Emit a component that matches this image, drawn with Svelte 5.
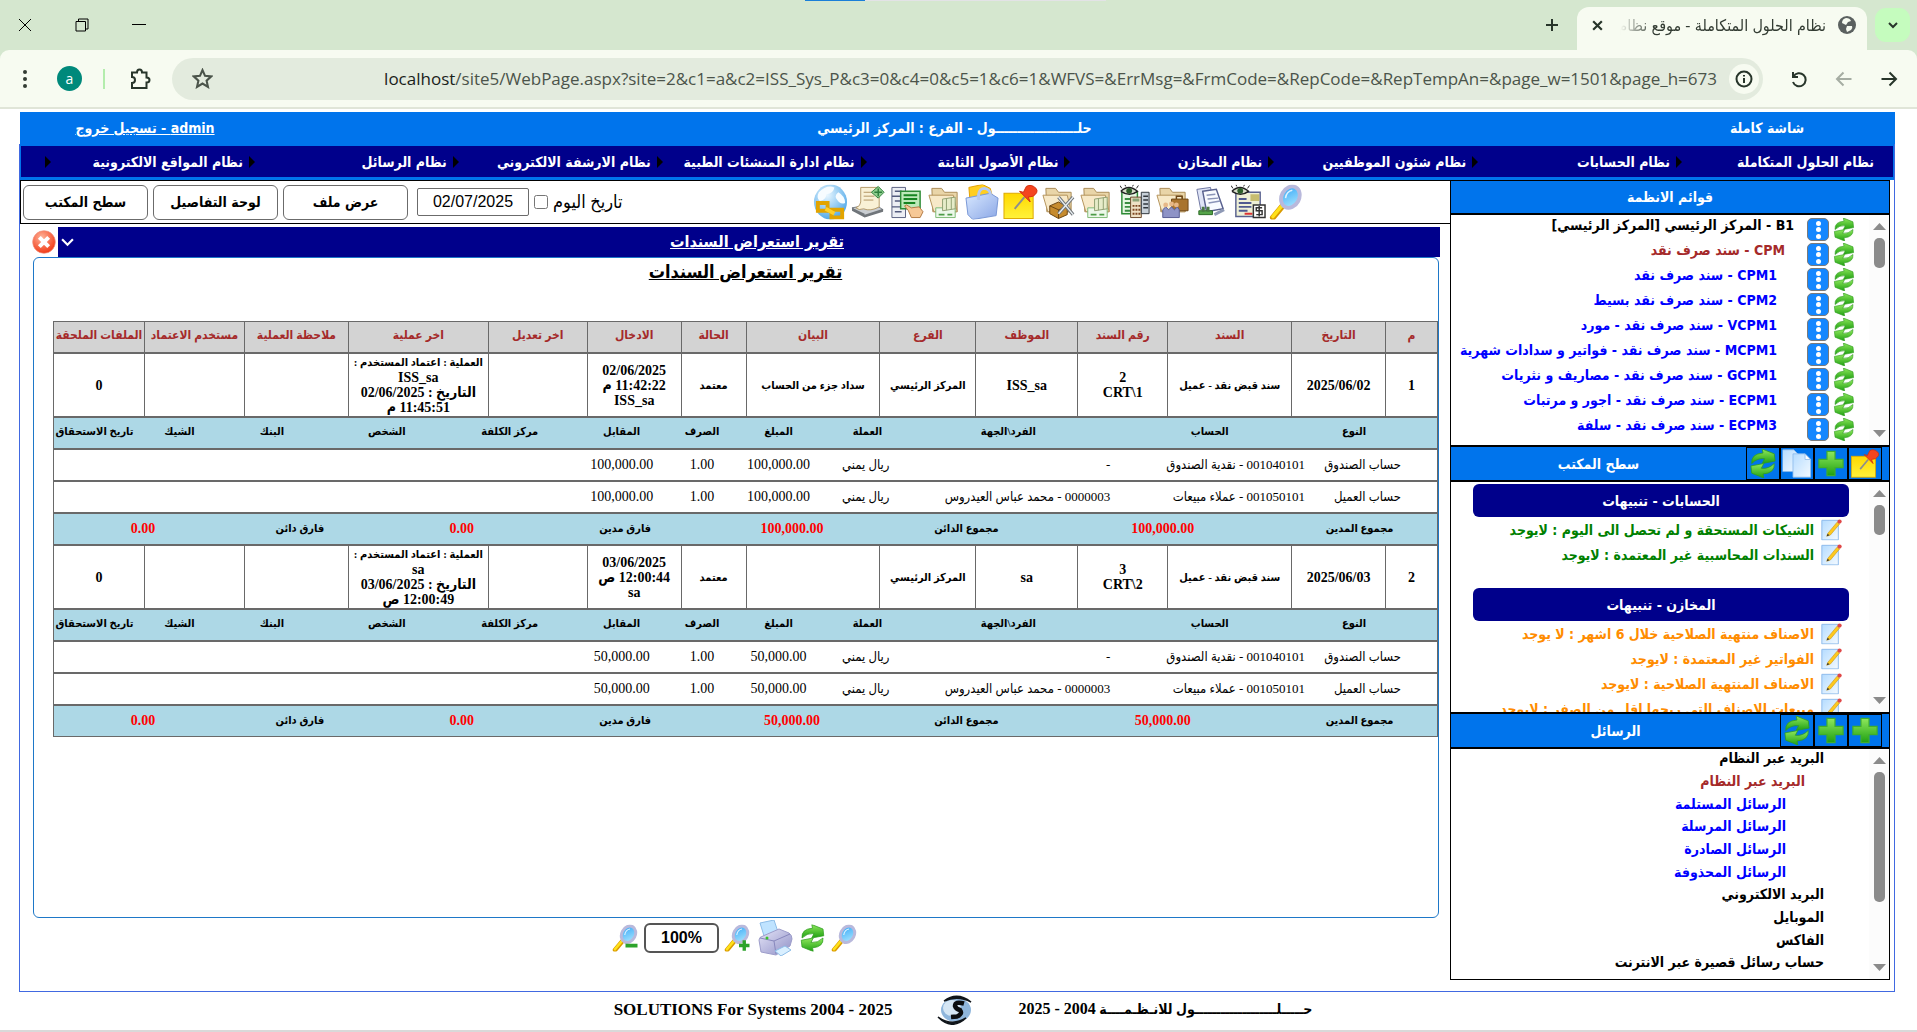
<script>
  const menu = [
    'نظام الحلول المتكاملة', 'نظام الحسابات', 'نظام شئون الموظفيين', 'نظام المخازن', 'نظام الأصول الثابتة',
    'نظام ادارة المنشئات الطبية', 'نظام الارشفة الالكتروني', 'نظام الرسائل', 'نظام المواقع الالكترونية'
  ];
  const tools = ['search', 'invoice', 'print-docs', 'staff', 'calc', 'money', 'repair', 'pin', 'bag', 'money', 'forms', 'note', 'globe'];
  const systems = [
    { text: 'B1 - المركز الرئيسي [المركز الرئيسي]', level: 0 },
    { text: 'CPM - سند صرف نقد', level: 1 },
    { text: 'CPM1 - سند صرف نقد', level: 2 },
    { text: 'CPM2 - سند صرف نقد بسيط', level: 2 },
    { text: 'VCPM1 - سند صرف نقد - مورد', level: 2 },
    { text: 'MCPM1 - سند صرف نقد - فواتير و سدادات شهرية', level: 2 },
    { text: 'GCPM1 - سند صرف نقد - مصاريف و نثريات', level: 2 },
    { text: 'ECPM1 - سند صرف نقد - اجور و مرتبات', level: 2 },
    { text: 'ECPM3 - سند صرف نقد - سلفة', level: 2 }
  ];
  const alerts = [
    { title: 'الحسابات - تنبيهات', tone: 'green', items: ['الشيكات المستحقة و لم تحصل الى اليوم : لايوجد', 'السندات المحاسبية غير المعتمدة : لايوجد'] },
    { title: 'المخازن - تنبيهات', tone: 'orange', items: ['الاصناف منتهية الصلاحية خلال 6 اشهر : لا يوجد', 'الفواتير غير المعتمدة : لايوجد', 'الاصناف المنتهية الصلاحية : لايوجد', 'مبيعات الاصناف التي ربحها اقل من الصفر : لايوجد'] }
  ];
  const mail = [
    { text: 'البريد عبر النظام', level: 0 },
    { text: 'البريد عبر النظام', level: 1 },
    { text: 'الرسائل المستلمة', level: 2 },
    { text: 'الرسائل المرسلة', level: 2 },
    { text: 'الرسائل الصادرة', level: 2 },
    { text: 'الرسائل المحذوفة', level: 2 },
    { text: 'البريد الالكتروني', level: 0 },
    { text: 'الموبايل', level: 0 },
    { text: 'الفاكس', level: 0 },
    { text: 'حساب رسائل قصيرة عبر الانترنت', level: 0 }
  ];

  const masterCols = [51, 94, 124, 90, 102, 96, 134, 65, 94, 99, 140, 104, 100, 91];
  const detailCols = [130, 195, 208, 74, 104, 49, 112, 112, 134, 96, 89, 81];
  const totalCols = [155, 239, 154, 195, 139, 188, 136, 178];
  const masterHead = ['م', 'التاريخ', 'السند', 'رقم السند', 'الموظف', 'الفرع', 'البيان', 'الحالة', 'الادخال', 'اخر تعديل', 'اخر عملية', 'ملاحظة العملية', 'مستخدم الاعتماد', 'الملفات الملحقة'];
  const detailHead = ['النوع', 'الحساب', 'الفرد\\الجهة', 'العملة', 'المبلغ', 'الصرف', 'المقابل', 'مركز الكلفة', 'الشخص', 'البنك', 'الشيك', 'تاريخ الاستحقاق'];
  const records = [
    {
      cells: [['1'], ['2025/06/02'], ['سند قبض نقد - عميل'], ['2', 'CRT\\1'], ['ISS_sa'], ['المركز الرئيسي'], ['سداد جزء من الحساب'], ['معتمد'],
        ['02/06/2025', '11:42:22 م', 'ISS_sa'], [], ['العملية : اعتماد المستخدم :', 'ISS_sa', 'التاريخ : 02/06/2025', '11:45:51 م'], [], [], ['0']],
      amount: '100,000.00'
    },
    {
      cells: [['2'], ['2025/06/03'], ['سند قبض نقد - عميل'], ['3', 'CRT\\2'], ['sa'], ['المركز الرئيسي'], [], ['معتمد'],
        ['03/06/2025', '12:00:44 ص', 'sa'], [], ['العملية : اعتماد المستخدم :', 'sa', 'التاريخ : 03/06/2025', '12:00:49 ص'], [], [], ['0']],
      amount: '50,000.00'
    }
  ];
  const lines = (amount) => [
    ['حساب الصندوق', '001040101 - نقدية الصندوق', '-', 'ريال يمني', amount, '1.00', amount],
    ['حساب العميل', '001050101 - عملاء مبيعات', '0000003 - محمد عباس العيدروس', 'ريال يمني', amount, '1.00', amount]
  ];
  const totals = (amount) => ['مجموع المدين', amount, 'مجموع الدائن', amount, 'فارق مدين', '0.00', 'فارق دائن', '0.00'];
  const arabicOnly = (s) => /[\u0600-\u06ff]/.test(s) && !/\d/.test(s);

  let today = $state('02/07/2025');
  let zoom = $state('100%');
</script>

{#snippet icon(name, cls)}
  <svg class={cls} viewBox="0 0 36 36" aria-hidden="true"><use href="#i-{name}" /></svg>
{/snippet}

{#snippet cols(list)}
  <colgroup>
    {#each list as w}<col style="width:{(w / 1384) * 100}%" />{/each}
  </colgroup>
{/snippet}

{#snippet scrollbar(cls)}
  <div class="scrollbar {cls}" aria-hidden="true">
    <svg viewBox="0 0 13 7"><path d="M0 7L6.500 0L13 7Z" /></svg>
    <i></i>
    <svg class="down" viewBox="0 0 13 7"><path d="M0 0L6.500 7L13 0Z" /></svg>
  </div>
{/snippet}

<svg class="defs" width="0" height="0" aria-hidden="true">
  <defs>
    <linearGradient id="g-green" x1="0" y1="0" x2="0" y2="1"><stop offset="0" stop-color="#8fe85c" /><stop offset="1" stop-color="#1fa012" /></linearGradient>
    <linearGradient id="g-lens" x1="0" y1="0" x2="1" y2="1"><stop offset="0" stop-color="#2fa4f7" /><stop offset="1" stop-color="#b5ecff" /></linearGradient>
    <linearGradient id="g-page" x1="0" y1="0" x2="1" y2="1"><stop offset="0" stop-color="#b5dcff" /><stop offset="1" stop-color="#f4faff" /></linearGradient>
    <linearGradient id="g-yellow" x1="0" y1="0" x2="0" y2="1"><stop offset="0" stop-color="#ffd800" /><stop offset="1" stop-color="#fff23a" /></linearGradient>
    <linearGradient id="g-bag" x1="0" y1="0" x2="1" y2="1"><stop offset="0" stop-color="#d8e8ff" /><stop offset="1" stop-color="#8ba7e6" /></linearGradient>
    <radialGradient id="g-red" cx=".4" cy=".3" r=".8"><stop offset="0" stop-color="#ffb49a" /><stop offset="1" stop-color="#f02a05" /></radialGradient>
    <radialGradient id="g-globe" cx=".4" cy=".3" r=".8"><stop offset="0" stop-color="#e9f7ff" /><stop offset="1" stop-color="#3f9fe6" /></radialGradient>
    <linearGradient id="g-printer" x1="0" y1="0" x2="1" y2="1"><stop offset="0" stop-color="#e6e6f8" /><stop offset="1" stop-color="#8f8fc6" /></linearGradient>
  </defs>
  <symbol id="i-search" viewBox="0 0 36 36">
    <path d="M4 34L14 22" stroke="#d99a00" stroke-width="6" stroke-linecap="round" /><path d="M4 33L14 21" stroke="#ffe11a" stroke-width="3.500" stroke-linecap="round" />
    <ellipse cx="22" cy="13" rx="9" ry="11.500" transform="rotate(28 22 13)" fill="url(#g-lens)" stroke="#b9b9dc" stroke-width="4" />
    <path d="M17 14q1-7 7-8" stroke="#fff" stroke-width="1.500" fill="none" opacity=".8" />
  </symbol>
  <symbol id="i-zoom-in" viewBox="0 0 36 36"><use href="#i-search" /><path d="M20 28h14M27 21v14" stroke="#2da32b" stroke-width="4.500" /></symbol>
  <symbol id="i-zoom-out" viewBox="0 0 36 36"><use href="#i-search" /><path d="M18 28h16" stroke="#2da32b" stroke-width="5" /></symbol>
  <symbol id="i-refresh" viewBox="0 0 36 36">
    <path d="M4 18Q3 6 18 5L17 0L32 6L33 15L17 18L20 12Q11 11 4 18Z" fill="url(#g-green)" stroke="#2f9d20" />
    <path d="M32 18Q33 30 18 31L19 36L4 30L3 21L19 18L16 24Q25 25 32 18Z" fill="url(#g-green)" stroke="#2f9d20" />
  </symbol>
  <symbol id="i-plus" viewBox="0 0 36 36"><path d="M13 3h10v10h10v10H23v10H13V23H3V13h10Z" fill="url(#g-green)" stroke="#3fae2c" stroke-width="1.500" /></symbol>
  <symbol id="i-pin" viewBox="0 0 36 36">
    <rect x="1" y="9" width="30" height="26" fill="url(#g-yellow)" stroke="#dda800" />
    <path d="M12 25L22 13" stroke="#8d8d8d" stroke-width="2" /><path d="M17 7L28 18L26 13L31 12Q37 8 34 4Q29-1 24 2L21 8Z" fill="#f4451f" stroke="#d33010" />
  </symbol>
  <symbol id="i-copy" viewBox="0 0 36 36">
    <path d="M0 1h14l7 7v20H0Z" fill="url(#g-page)" stroke="#8ab8ea" /><path d="M13 6h15l7 7v22H13Z" fill="url(#g-page)" stroke="#8ab8ea" /><path d="M28 6v7h7Z" fill="#fff" stroke="#8ab8ea" />
  </symbol>
  <symbol id="i-edit" viewBox="0 0 36 36">
    <path d="M3 3h27v32H3Z" fill="url(#g-page)" stroke="#8ab8ea" stroke-width="1.500" /><path d="M13 24L28 6L32 9L17 27L11 29Z" fill="#ffc91d" stroke="#c99613" /><circle cx="32" cy="5" r="3.500" fill="#e04848" /><path d="M11 29l1.500-4 3 2.500Z" fill="#333" />
  </symbol>
  <symbol id="i-close" viewBox="0 0 36 36"><circle cx="18" cy="18" r="17" fill="url(#g-red)" stroke="#f0907c" /><path d="M11 11L25 25M25 11L11 25" stroke="#fff" stroke-width="6" /></symbol>
  <symbol id="i-printer" viewBox="0 0 36 36">
    <path d="M3 3L17 0L22 15L8 19Z" fill="#bfe3ff" stroke="#8dbde8" /><path d="M2 20Q2 17 6 16L22 9L32 13Q35 15 35 19L33 26L19 35L4 32Z" fill="url(#g-printer)" stroke="#9d9dca" /><path d="M3 18L17 21L33 14M17 21L19 34" stroke="#8888bd" fill="none" /><circle cx="10" cy="18" r="1.500" fill="#38c42b" /><path d="M18 31L28 26L34 30L24 36Z" fill="#d9efff" stroke="#8dbde8" />
  </symbol>
  <symbol id="i-folder" viewBox="0 0 36 36"><path d="M5 4h10l3 4h13v20H6Z" fill="#e9d5a8" stroke="#a98a55" /><path d="M2 11h25l4 17H7Z" fill="#f7e9c8" stroke="#b4935b" /></symbol>
  <symbol id="i-money" viewBox="0 0 36 36">
    <use href="#i-folder" /><path d="M9 24h20v10H9Z" fill="#edf8ea" stroke="#7dba75" /><path d="M16 15l13-2v12l-13 2Z" fill="#e6ecc9" stroke="#8fa073" /><path d="M20 14.500v12M25 13.500v12" stroke="#8fa073" /><path d="M12 31h6M21 31h5" stroke="#4d9b47" stroke-width="2" />
  </symbol>
  <symbol id="i-repair" viewBox="0 0 36 36">
    <use href="#i-folder" /><path d="M9 22l9-4 9 5v8l-9 4-9-5Z" fill="#c68b2e" stroke="#6b4511" /><path d="M9 22l9 4 9-3M18 26v9" stroke="#6b4511" fill="none" /><path d="M18 13L33 31M33 13L18 30" stroke="#72777b" stroke-width="3.500" /><path d="M18 13L33 31M33 13L18 30" stroke="#e9eef1" stroke-width="1.500" />
  </symbol>
  <symbol id="i-bag" viewBox="0 0 36 36">
    <path d="M4 3L18 0L26 4L29 15H5Z" fill="#ffce20" stroke="#e3a000" /><path d="M1 14L26 9L34 14L32 32L8 36L3 31Z" fill="url(#g-bag)" stroke="#7796d6" /><path d="M14 16V10Q15 4 20 4Q26 5 26 10V14" stroke="#b5c9f0" stroke-width="3" fill="none" />
  </symbol>
  <symbol id="i-globe" viewBox="0 0 36 36">
    <ellipse cx="18" cy="18" rx="17" ry="18" fill="url(#g-globe)" /><path d="M6 8q8-8 16-5q-1 6-8 7q-1 6-7 7q-4-3-1-9M26 8q7 4 7 11q-5 2-8-3q-4-4 1-8" fill="#f7fcff" /><path d="M5 19h10v8H5ZM19 26h11v8H19Z" fill="none" stroke="#e2a400" stroke-width="4" /><path d="M13 25L22 30" stroke="#ffd02b" stroke-width="4" />
  </symbol>
  <symbol id="i-note" viewBox="0 0 36 36">
    <path d="M1 24L24 20L33 26L14 33Z" fill="#c9cdd1" stroke="#777d84" /><path d="M1 24l13 6v4L1 27ZM14 31l19-6v3l-19 6Z" fill="#70757a" /><path d="M10 3h19v20q-9 5-16 2q-5 2-8-1q5-2 5-6Z" fill="#f9f1d6" stroke="#b49a69" /><path d="M13 8h9M13 12h11M13 16h10" stroke="#b29563" /><path d="M21 8l7-6 6 6-6 6Z" fill="#8fcf8f" stroke="#2f7f3d" /><path d="M28 4v8M24 8h8" stroke="#2f7f3d" stroke-width="1.500" />
  </symbol>
  <symbol id="i-forms" viewBox="0 0 36 36">
    <path d="M3 3h14v31H3Z" fill="#eceef4" stroke="#596080" /><path d="M3 12h14M3 23h14M6 7h7M6 17h7M6 28h7" stroke="#525a7d" stroke-width="1.500" /><path d="M12 7h20v18H12Z" fill="#bde9b9" stroke="#2c8b35" stroke-width="1.500" /><path d="M15 11h14M15 15h14M15 19h12" stroke="#168421" stroke-width="2" /><path d="M20 27l-4-5 2-1 5 3 8-1 4 5-3 6h-9Z" fill="#f6c896" stroke="#b27942" />
  </symbol>
  <symbol id="i-eye" viewBox="0 0 36 36"><path d="M1 7Q9-1 18 7Q10 13 1 7" fill="#d6dcc8" stroke="#222" stroke-width="1.500" /><circle cx="9.500" cy="6.500" r="3" fill="#2c5f2a" /><path d="M2 4L0 1M6 2L5 0M13 2L14 0M17 4L19 1" stroke="#222" /></symbol>
  <symbol id="i-calc" viewBox="0 0 36 36">
    <path d="M5 8h16v22H5Z" fill="#e5f6e2" stroke="#2c8b35" stroke-width="1.500" /><path d="M8 15h9M8 19h9M8 23h9M8 27h9" stroke="#3a8d42" stroke-width="2" /><path d="M14 13h11v21H14Z" fill="#efe1c5" stroke="#6b4728" /><path d="M16 16h7" stroke="#8aa377" stroke-width="3" /><path d="M16 22h2m1 0h2m1 0h2M16 26h2m1 0h2m1 0h2M16 30h2m1 0h2m1 0h2" stroke="#7d4620" stroke-width="2" /><path d="M25 8h8v22h-8Z" fill="#c7d0d8" stroke="#30363c" /><path d="M27 12h5M27 16h5M27 20h5M27 24h5" stroke="#30363c" stroke-width="1.500" /><use href="#i-eye" x="3" width="36" height="36" />
  </symbol>
  <symbol id="i-invoice" viewBox="0 0 36 36">
    <path d="M5 8h25v25H5Z" fill="#eef0d6" stroke="#59618f" stroke-width="1.500" /><path d="M8 15h8M8 19h13M8 23h13M8 27h9" stroke="#4f5a90" stroke-width="2" /><path d="M20 10h9v7h-9Z" fill="#c7bd70" /><path d="M14 30h8" stroke="#d33" stroke-width="2" /><path d="M23 21h12v13H23Z" fill="#fff" stroke="#333" stroke-width="1.500" /><path d="M32 24h-6v3h6v4h-6M29 22v11" fill="none" stroke="#333" stroke-width="1.500" /><use href="#i-eye" width="36" height="36" />
  </symbol>
  <symbol id="i-print-docs" viewBox="0 0 36 36">
    <path d="M4 5l14-2 4 20-14 3Z" fill="#dfe4f6" stroke="#6c75a0" /><path d="M10 7l14-2 7 20-17 3Z" fill="#f8faff" stroke="#59618f" stroke-width="1.500" /><path d="M14 11l9-1M15 15l11-1M16 19l12-2" stroke="#8b94b8" stroke-width="1.500" /><path d="M6 27h14v4H6Z" fill="#55a449" stroke="#2c6a25" /><path d="M9 23h3v5H9ZM14 23h3v5h-3Z" fill="#4a7943" /><path d="M22 31l10-5" stroke="#8e99b5" stroke-width="3" />
  </symbol>
  <symbol id="i-staff" viewBox="0 0 36 36">
    <use href="#i-folder" /><path d="M17 15h17v12H17Z" fill="#a9742e" stroke="#6d4718" /><path d="M22 15v-3h6v3" fill="none" stroke="#6d4718" stroke-width="1.500" /><path d="M8 34v-8l3-3 3 3 3-3 3 3 3-3 2 3v8Z" fill="#8e93c6" stroke="#565b92" /><circle cx="11" cy="21" r="2.500" fill="#e7b888" /><circle cx="17" cy="20" r="2.500" fill="#e7b888" /><circle cx="22" cy="21" r="2.500" fill="#e7b888" />
  </symbol>
</svg>

<div class="app" dir="rtl">
  <header class="browser">
    <div class="top-mark"></div>
    <div class="tabs">
      <button class="tab-list" aria-label="Search tabs"><svg viewBox="0 0 12 12"><path d="M2 4l4 4 4-4" /></svg></button>
      <div class="tab">
        <svg class="earth" viewBox="0 0 18 18"><circle cx="9" cy="9" r="9" fill="#5b6160" /><path d="M8 2q4 0 5 3l-3 1-2 3-4-2q0-4 4-5M9 10l5 0q1 2-1 4l-4 2-1-3Z" fill="#f7fbf1" /></svg>
        <span class="tab-title">نظام الحلول المتكاملة - موقع نظام</span>
        <button class="plain" aria-label="Close tab"><svg viewBox="0 0 12 12"><path d="M2 2l8 8M10 2l-8 8" /></svg></button>
      </div>
      <button class="plain new-tab" aria-label="New tab"><svg viewBox="0 0 14 14"><path d="M7 1v12M1 7h12" /></svg></button>
      <div class="window-controls">
        <button class="plain" aria-label="Minimize"><svg viewBox="0 0 14 14"><path d="M0 6.500h14" /></svg></button>
        <button class="plain" aria-label="Restore"><svg viewBox="0 0 14 14"><path d="M1 3.500h9.500v9.500h-9.500ZM3.500 3v-2h9.500v10h-2" /></svg></button>
        <button class="plain" aria-label="Close"><svg viewBox="0 0 14 14"><path d="M1 1l12 12M13 1L1 13" /></svg></button>
      </div>
    </div>
    <div class="toolbar">
      <button class="plain" aria-label="Back"><svg viewBox="0 0 18 18"><path d="M1.500 9h14M9.500 2.500L16 9l-6.500 6.500" /></svg></button>
      <button class="plain dim" aria-label="Forward"><svg viewBox="0 0 18 18"><path d="M16.500 9h-14M8.500 2.500L2 9l6.500 6.500" /></svg></button>
      <button class="plain" aria-label="Reload"><svg viewBox="0 0 18 18"><path d="M3 2v5h5M3.500 6.500A6.500 6.500 0 1 1 3 12" /></svg></button>
      <div class="omnibox">
        <button class="plain info" aria-label="Site information"><svg viewBox="0 0 18 18"><circle cx="9" cy="9" r="7.500" /><path d="M9 8v5M9 5v1.500" /></svg></button>
        <span class="url" dir="ltr"><b>localhost</b>/site5/WebPage.aspx?site=2&amp;c1=a&amp;c2=ISS_Sys_P&amp;c3=0&amp;c4=0&amp;c5=1&amp;c6=1&amp;WFVS=&amp;ErrMsg=&amp;FrmCode=&amp;RepCode=&amp;RepTempAn=&amp;page_w=1501&amp;page_h=673</span>
        <button class="plain star" aria-label="Bookmark"><svg viewBox="0 0 20 20"><path d="M10 2l2.400 5.500 6 .5-4.500 4 1.300 6-5.200-3.200L4.800 18l1.300-6L1.600 8l6-.5Z" /></svg></button>
      </div>
      <button class="plain puzzle" aria-label="Extensions"><svg viewBox="0 0 22 22"><path d="M3 4.500h5q0-3 2.500-3t2.500 3h4.500v5q3 0 3 2.500t-3 2.500v5.500h-14.500v-5q3 0 3-3t-3-3Z" /></svg></button>
      <span class="bar"></span>
      <button class="avatar" aria-label="Profile">a</button>
      <button class="plain dots" aria-label="Menu"><svg viewBox="0 0 4 18"><circle cx="2" cy="2" r="2" /><circle cx="2" cy="9" r="2" /><circle cx="2" cy="16" r="2" /></svg></button>
    </div>
  </header>

  <div class="page">
    <div class="account">
      <span>شاشة كاملة</span>
      <span>حلـــــــــــــــــــول - الفرع : المركز الرئيسي</span>
      <a href="#logout">admin - تسجيل خروج</a>
    </div>

    <div class="shell">
      <nav>
        {#each menu as item}
          <a href="#menu">{item}<svg viewBox="0 0 6 12"><path d="M0 0L6 6L0 12Z" /></svg></a>
        {/each}
      </nav>

      <div class="body">
        <aside>
          <section>
            <h2><span>قوائم الانظمة</span></h2>
            <div class="pane">
              {@render scrollbar('short')}
              <ul class="systems">
                {#each systems as s}
                  <li>
                    <button class="plain" aria-label="تحديث">{@render icon('refresh', 'refresh')}</button>
                    <button class="more" aria-label="المزيد"><i></i><i></i><i></i></button>
                    <a class="level{s.level}" href="#item">{s.text}</a>
                  </li>
                {/each}
              </ul>
            </div>
          </section>
          <section>
            <h2>
              {#each ['pin', 'plus', 'copy', 'refresh'] as name}<button class="tile" aria-label={name}>{@render icon(name, 'fill')}</button>{/each}
              <span>سطح المكتب</span>
            </h2>
            <div class="pane">
              {@render scrollbar('short')}
              <div class="alerts">
                {#each alerts as group}
                  <h3>{group.title}</h3>
                  <ul class={group.tone}>
                    {#each group.items as item}<li>{@render icon('edit', 'edit')}<a href="#alert">{item}</a></li>{/each}
                  </ul>
                {/each}
              </div>
            </div>
          </section>
          <section>
            <h2>
              {#each ['plus', 'plus', 'refresh'] as name}<button class="tile" aria-label={name}>{@render icon(name, 'fill')}</button>{/each}
              <span>الرسائل</span>
            </h2>
            <div class="pane">
              {@render scrollbar('long')}
              <ul class="mail">
                {#each mail as m}<li><a class="level{m.level}" href="#mail">{m.text}</a></li>{/each}
              </ul>
            </div>
          </section>
        </aside>

        <main>
          <div class="tools">
            <div class="tool-icons">
              {#each tools as t}<button class="plain" aria-label={t}>{@render icon(t, 'tool')}</button>{/each}
            </div>
            <div class="actions">
              <label for="today">تاريخ اليوم</label>
              <input id="today" type="checkbox" />
              <input class="date" type="text" bind:value={today} aria-label="التاريخ" />
              <button>عرض ملف</button>
              <button>لوحة التفاصيل</button>
              <button>سطح المكتب</button>
            </div>
          </div>

          <div class="title-row">
            <div class="title"><a href="#report">تقرير استعراض السندات</a><button class="plain" aria-label="خيارات"><svg viewBox="0 0 12 12"><path d="M1 3l5 5 5-5" /></svg></button></div>
            <button class="plain" aria-label="اغلاق">{@render icon('close', 'close')}</button>
          </div>

          <div class="report">
            <h1>تقرير استعراض السندات</h1>
            <table class="head">
              {@render cols(masterCols)}
              <thead><tr>{#each masterHead as h}<th>{h}</th>{/each}</tr></thead>
            </table>
            {#each records as r}
              <table class="master">
                {@render cols(masterCols)}
                <tbody><tr>{#each r.cells as cell}<td>{#each cell as line}<div class:ar={arabicOnly(line)}>{line}</div>{/each}</td>{/each}</tr></tbody>
              </table>
              <table class="detail names">
                {@render cols(detailCols)}
                <thead><tr>{#each detailHead as h}<th>{h}</th>{/each}</tr></thead>
              </table>
              {#each lines(r.amount) as line}
                <table class="detail">
                  {@render cols(detailCols)}
                  <tbody><tr>{#each line as v}<td>{v}</td>{/each}<td colspan="5"></td></tr></tbody>
                </table>
              {/each}
              <table class="total">
                {@render cols(totalCols)}
                <tbody><tr>{#each totals(r.amount) as v, i}<td class:sum={i % 2 === 1}>{v}</td>{/each}</tr></tbody>
              </table>
            {/each}
          </div>

          <div class="zoom">
            <button class="plain" aria-label="بحث">{@render icon('search', 'z')}</button>
            <button class="plain" aria-label="تحديث">{@render icon('refresh', 'z')}</button>
            <button class="plain" aria-label="طباعة">{@render icon('printer', 'large')}</button>
            <button class="plain" aria-label="تكبير">{@render icon('zoom-in', 'z')}</button>
            <input type="text" bind:value={zoom} aria-label="التكبير" dir="ltr" />
            <button class="plain" aria-label="تصغير">{@render icon('zoom-out', 'z')}</button>
          </div>
        </main>
      </div>
    </div>

    <footer>
      <span class="ar-brand">حـــــلـــــــــــــــــــول للانـظـمــــة <b>2004 - 2025</b></span>
      <svg viewBox="0 0 38 30"><ellipse cx="20" cy="15" rx="15" ry="12" fill="#8fb6dc" /><ellipse cx="16" cy="13" rx="9" ry="8" fill="#d5e6f4" /><path d="M8 6Q21-4 35 7Q22 0 8 6M2 22Q16 32 30 23Q16 36 2 22" fill="#10151a" stroke="#10151a" stroke-width="1.500" /><path d="M28 8.500Q19 6 19 11Q20 14 24 15Q27 19 21 21.500L15 22" stroke="#0b0d10" stroke-width="4.500" fill="none" /></svg>
      <b dir="ltr">SOLUTIONS For Systems 2004 - 2025</b>
    </footer>
  </div>
  <div class="edge"></div>
</div>

<style>
  :global(body) { margin: 0; background: #fff; }
  .defs { position: absolute; }
  .app { min-height: 100vh; display: flex; flex-direction: column; overflow: hidden; font: bold 14px/20px "DejaVu Sans Condensed", "DejaVu Sans", sans-serif; color: #000; }
  .app *, .app { box-sizing: border-box; }
  button, input { font: inherit; color: inherit; margin: 0; }
  ul, h1, h2, h3 { margin: 0; padding: 0; list-style: none; font: inherit; }
  a { color: inherit; text-decoration: none; white-space: nowrap; }
  .plain { border: 0; background: none; padding: 0; display: flex; align-items: center; justify-content: center; }

  .browser { background: #d5e7cf; border-bottom: 2px solid #e0e5d8; color: #333c33; font: 16px/20px "Open Sans", "DejaVu Sans Condensed", sans-serif; position: relative; }
  .top-mark { position: absolute; top: 0; left: 42%; width: 301px; height: 1px; background: linear-gradient(to right, #1a7fd8 20%, #e3e3e6 20%); }
  .browser svg { fill: none; stroke: #27352a; stroke-width: 2; display: block; }
  .tabs { height: 50px; display: flex; align-items: center; padding: 0 7px 0 18px; }
  .tab-list { width: 35px; height: 34px; border: 0; border-radius: 11px; background: #c5fcbe; display: flex; align-items: center; justify-content: center; padding: 0; }
  .tab-list svg { width: 12px; }
  .tab { width: 290px; height: 43px; margin: 7px 8px 0 0; border-radius: 12px 12px 0 0; background: #f7fbf1; display: flex; align-items: center; gap: 12px; padding: 0 11px 7px 14px; }
  .tab .earth { width: 18px; stroke: none; flex: none; }
  .tab-title { flex: 1; font-size: 16px; line-height: 24px; white-space: nowrap; overflow: hidden; mask-image: linear-gradient(to left, #000 82%, transparent 98%); }
  .tab .plain svg { width: 13px; }
  .new-tab { margin-right: 18px; }
  .new-tab svg { width: 14px; }
  .window-controls { margin-right: auto; display: flex; gap: 43px; }
  .browser .window-controls svg { width: 14px; stroke: #000; stroke-width: 1; }
  .toolbar { height: 57px; background: #f7fbf1; border-radius: 9px 9px 0 0; display: flex; align-items: center; padding: 0 19px 0 23px; }
  .toolbar .plain svg { width: 18px; }
  .toolbar > .plain { margin-left: 27px; }
  .toolbar .dim svg { stroke: #a6ada3; }
  .omnibox { flex: 1; height: 42px; border-radius: 21px; background: #e3ebde; display: flex; align-items: center; gap: 12px; padding: 0 4px 0 20px; min-width: 0; }
  .info { width: 30px; height: 30px; border-radius: 50%; background: #f7fbf1; flex: none; }
  .url { color: #4b544a; font: 17px/24px "Open Sans", sans-serif; white-space: nowrap; overflow: hidden; }
  .url b { font-weight: normal; color: #1a221a; }
  .star { margin-right: auto; }
  .toolbar .star svg { width: 21px; stroke: #4b544a; }
  .toolbar .puzzle { margin: 0 21px 0 24px; }
  .toolbar .puzzle svg { width: 22px; }
  .bar { width: 2px; height: 20px; background: #b4edad; }
  .avatar { width: 25px; height: 25px; border: 0; border-radius: 50%; background: #00897b; color: #fff; font-size: 14px; line-height: 20px; padding: 0; margin: 0 21px 0 30px; }
  .toolbar .dots { margin: 0; }
  .toolbar .dots svg { width: 4px; fill: #333c33; stroke: none; }

  .page { flex: 1; padding: 3px 22px 0 19px; display: flex; flex-direction: column; }
  .account { height: 32px; background: #0074ec; color: #fff; display: grid; grid-template-columns: 256px 1fr 250px; align-items: center; text-align: center; line-height: 28px; margin-left: 1px; }
  .account a { text-decoration: underline; }
  .shell { border: 1px solid #4169e1; border-top: 0; }
  nav { height: 36px; border: solid #0074ec; border-width: 2px 1px 3px; background: #00008b; color: #fff; display: flex; padding: 0 13px 0 24px; }
  nav a { flex: 1; display: flex; align-items: center; justify-content: space-between; padding-right: 6px; }
  nav svg { width: 6px; flex: none; }
  .body { display: flex; align-items: flex-start; padding-right: 4px; }

  aside { width: 440px; flex: none; border: 1px solid #000; margin-bottom: 11px; }
  h2 { display: flex; align-items: stretch; height: 34px; background: #0074ec; color: #fff; border-bottom: 2px solid #000; padding-right: 7px; }
  section:first-child h2 { padding: 0; }
  section + section h2 { height: 37px; border-top: 2px solid #000; }
  h2 span { flex: 1; text-align: center; align-self: center; }
  .tile { width: 34px; border: 1px solid #000; background: none; padding: 1px; display: flex; }
  .fill { width: 100%; height: 100%; }
  .pane { height: 230px; overflow: hidden; display: flex; background: #fff; }
  .scrollbar { width: 20px; flex: none; background: #fcfcfc; display: flex; flex-direction: column; align-items: center; padding: 8px 0; gap: 8px; }
  .scrollbar svg { width: 13px; height: 7px; fill: #8b8b8b; flex: none; }
  .scrollbar .down { margin-top: auto; }
  .scrollbar i { width: 11px; height: 30px; border-radius: 5px; background: #8b8b8b; }
  .long i { height: 130px; }
  .systems { padding: 2px 15px 0 0; }
  .systems li { height: 25px; display: flex; align-items: center; }
  .systems .plain { width: 20px; }
  .refresh { width: 24px; height: 23px; flex: none; }
  .more { width: 22px; height: 23px; border: 1px solid #7a7a7a; border-radius: 5px; background: #1487ff; margin: 0 5px 0 13px; padding: 0; display: flex; flex-direction: column; align-items: center; justify-content: space-evenly; }
  .more i { width: 5px; height: 5px; border-radius: 50%; background: #fff; }
  .systems a { line-height: 20px; padding-bottom: 9px; }
  .level1 { color: #a52a2a; }
  .level2 { color: #00f; }
  .systems .level1 { margin-right: 9px; }
  .systems .level2 { margin-right: 17px; }
  .alerts { flex: 1; padding: 2px 20px 0 22px; }
  h3 { height: 33px; border-radius: 6px; background: #00008b; color: #fff; display: flex; align-items: center; justify-content: center; }
  .alerts ul { margin-bottom: 21px; padding-right: 7px; }
  .alerts li { height: 25px; display: flex; align-items: center; gap: 6px; }
  .edit { width: 22px; height: 23px; flex: none; }
  .green { color: #008000; }
  .orange { color: #ff8c00; }
  .mail { padding-right: 45px; }
  .mail li { height: 23px; line-height: 18px; }
  .mail li:nth-child(3n) { height: 22px; }
  .mail .level1 { margin-right: 19px; }
  .mail .level2 { margin-right: 38px; }

  main { flex: 1; min-width: 0; display: flex; flex-direction: column; }
  .tools { height: 44px; border: 1px solid #000; border-right: 0; display: flex; align-items: center; }
  .tool-icons { flex: 1; display: flex; justify-content: center; gap: 3px; padding-left: 44px; }
  .tool { width: 35px; height: 36px; }
  .actions { display: flex; align-items: center; gap: 5px; padding-left: 2px; }
  .actions label { font: 18px/24px "Liberation Serif", "DejaVu Sans Condensed", serif; }
  .actions input[type="checkbox"] { width: 14px; height: 14px; }
  .actions .date { width: 112px; height: 28px; margin: 0 0 0 4px; border: 1px solid #6b6b6b; border-radius: 2px; font: 16px/20px "Liberation Sans", sans-serif; text-align: center; padding: 0; }
  .actions button { width: 125px; height: 35px; border: 1px solid #6b6b6b; border-radius: 6px; background: #fff; padding: 0; }
  .title-row { display: flex; margin: 3px 10px 0 10px; align-items: stretch; }
  .title { flex: 1; height: 30px; background: #00008b; color: #fff; display: flex; align-items: center; padding-left: 3px; }
  .title a { flex: 1; text-align: center; text-decoration: underline; font-size: 16px; }
  .title svg { width: 13px; fill: none; stroke: #fff; stroke-width: 2; }
  .close { width: 28px; height: 24px; }
  .report { min-height: 661px; margin: 0 11px 0 13px; border: 1px solid #1e78c8; border-radius: 6px; padding: 0 0 0 19px; }
  h1 { font: bold 18px/28px "Liberation Serif", "DejaVu Sans Condensed", serif; text-align: center; text-decoration: underline; height: 63px; }
  table { width: 100%; table-layout: fixed; border-collapse: separate; border-spacing: 0; border: 1px solid #696969; height: 32px; font: bold 14px/15px "Liberation Serif", "DejaVu Sans Condensed", serif; }
  th, td { padding: 0 0 2px; text-align: center; white-space: nowrap; }
  .head { background: #d3d3d3; color: #a52a2a; font-size: 12px; }
  .head th { padding-bottom: 4px; }
  .head th + th, .master td + td { border-right: 1px solid #696969; }
  .master { height: 64px; }
  .master td { padding: 0; }
  .ar { font-size: 11px; }
  .names, .total { background: #add8e6; font-size: 11px; }
  .names th { padding-bottom: 4px; }
  .detail td { font-weight: normal; }
  .detail td:nth-child(-n + 4) { text-align: right; font-size: 13px; }
  .detail tr > :nth-child(1) { padding-right: 36px; }
  .detail td:nth-child(2), .detail td:nth-child(3) { padding-right: 2px; }
  .detail td:nth-child(4) { padding-right: 15px; }
  .total .sum { color: #f00; font-size: 14px; }

  .zoom { height: 40px; display: flex; align-items: center; justify-content: center; gap: 5px; }
  .z { width: 27px; height: 30px; }
  .large { width: 38px; height: 36px; }
  .zoom input { width: 75px; height: 30px; border: 2px solid #555; border-radius: 6px; text-align: center; font: bold 16px/20px "Liberation Sans", sans-serif; padding: 0; }
  footer { flex: 1; display: flex; align-items: center; justify-content: center; gap: 44px; padding: 0 0 3px 12px; font: bold 17px/20px "Liberation Serif", "DejaVu Sans Condensed", serif; }
  footer svg { width: 38px; height: 30px; }
  .ar-brand { font-size: 14px; white-space: nowrap; }
  .ar-brand b { font-size: 16px; }
  .edge { height: 2px; background: #d9d9d9; }
</style>
